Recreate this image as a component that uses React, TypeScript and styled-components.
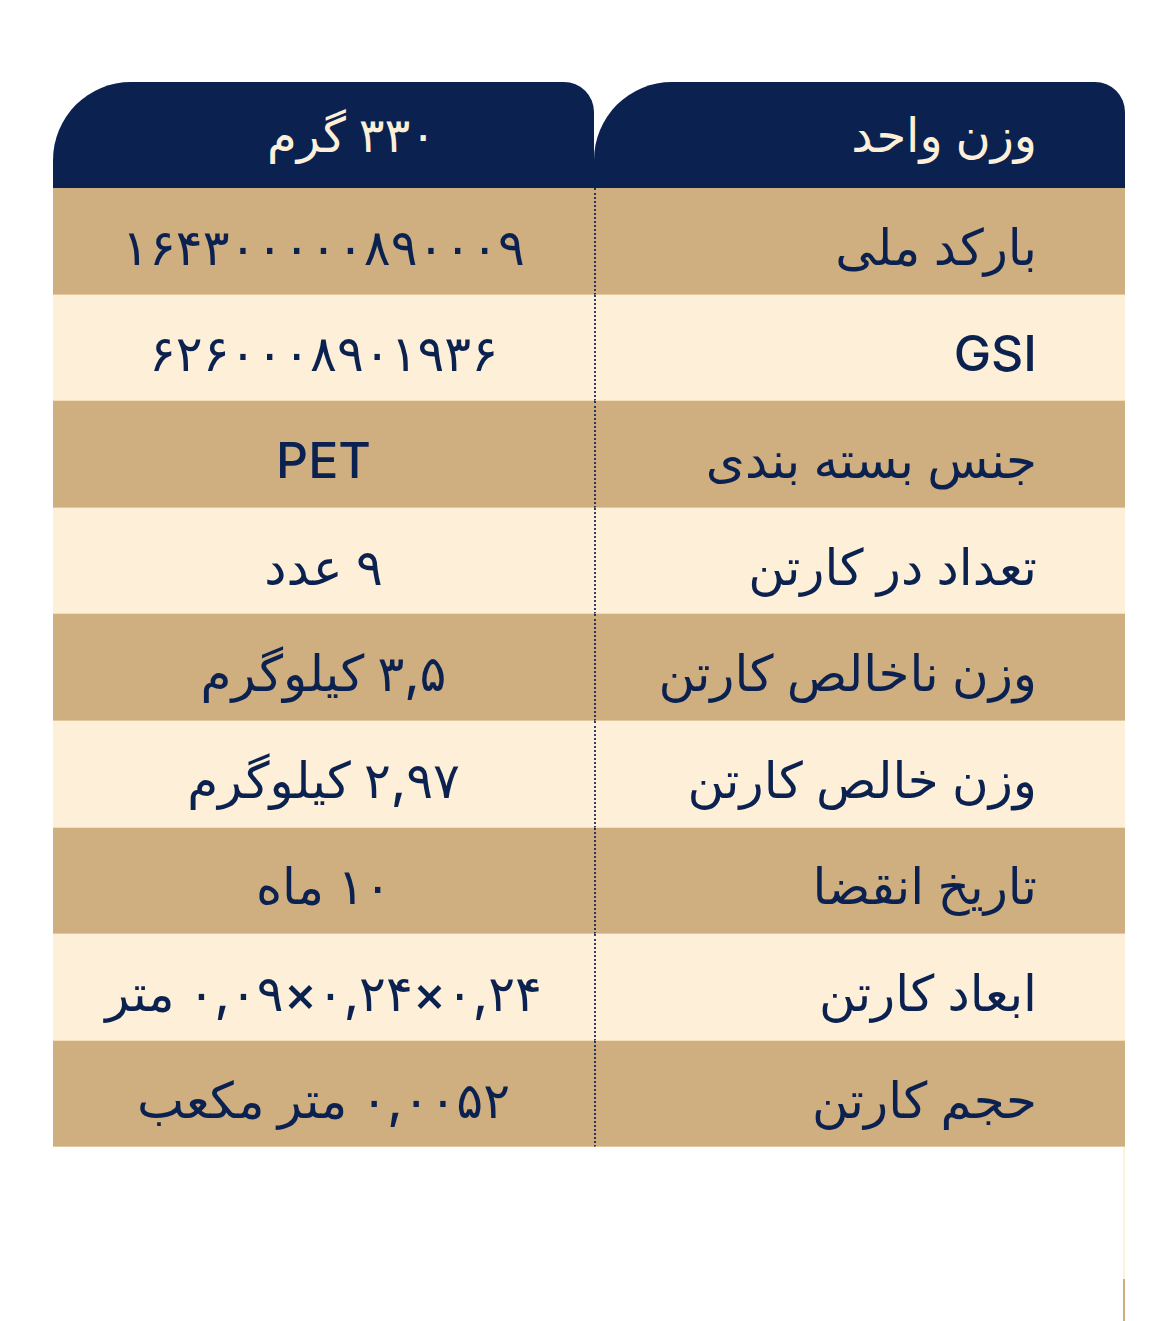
import React from "react";
import styled, { createGlobalStyle } from "styled-components";

const Global = createGlobalStyle`
  html, body { margin: 0; padding: 0; background: #ffffff; }
  body { font-family: Inter, "DejaVu Sans", sans-serif; }
`;

const NAVY = "#0b2150";
const TAN = "#cfae80";
const CREAM = "#fef0d8";

const Page = styled.div`
  width: 1165px;
  height: 1321px;
  padding: 82px 0 0 53px;
  box-sizing: border-box;
  overflow: hidden;
`;

const Table = styled.div`
  direction: rtl;
  width: 1072px;
  display: grid;
  grid-template-columns: 531px 541px;
`;

const HeadCell = styled.div<{ $side: "label" | "value" }>`
  height: 106px;
  background: ${NAVY};
  border-radius: 78px 30px 0 0;
  display: flex;
  align-items: center;
  justify-content: ${(p) => (p.$side === "label" ? "flex-start" : "center")};
  padding: ${(p) => (p.$side === "label" ? "0 88px 2px 0" : "0 0 2px 56px")};
  box-sizing: border-box;
  color: ${CREAM};
  font-family: Inter, "DejaVu Sans", sans-serif;
  font-size: 48px;
  font-weight: 500;
`;

const Cell = styled.div<{ $tone: "tan" | "cream"; $side: "label" | "value" }>`
  height: 106.6px;
  background: ${(p) => (p.$tone === "tan" ? TAN : CREAM)};
  box-sizing: border-box;
  display: flex;
  align-items: center;
  justify-content: ${(p) => (p.$side === "label" ? "flex-start" : "center")};
  padding: ${(p) => (p.$side === "label" ? "12px 88px 0 0" : "12px 0 0 0")};
  border-left: ${(p) => (p.$side === "label" ? `2px dotted rgba(11, 33, 80, 0.85)` : "none")};
  border-bottom: 1px solid ${(p) => (p.$tone === "tan" ? "#e2c89f" : "#f3ddb8")};
  color: ${NAVY};
  font-family: Inter, "DejaVu Sans", sans-serif;
  font-size: 50px;
  font-weight: 500;
  white-space: nowrap;
`;

const Tail = styled.div`
  width: 1072px;
  height: 174px;
  display: flex;
  justify-content: flex-end;
`;

const TailStrip = styled.div`
  width: 2px;
  height: 100%;
  background: linear-gradient(to bottom, #fbf3dc 0%, #fbf3dc 76%, ${TAN} 76%, ${TAN} 100%);
`;

const rows: [string, string][] = [
  ["بارکد ملی", "۱۶۴۳۰۰۰۰۰۸۹۰۰۰۹"],
  ["GSI", "۶۲۶۰۰۰۸۹۰۱۹۳۶"],
  ["جنس بسته بندی", "PET"],
  ["تعداد در کارتن", "۹ عدد"],
  ["وزن ناخالص کارتن", "۳,۵ کیلوگرم"],
  ["وزن خالص کارتن", "۲,۹۷ کیلوگرم"],
  ["تاریخ انقضا", "۱۰ ماه"],
  ["ابعاد کارتن", "۰,۲۴×۰,۲۴×۰,۰۹  متر"],
  ["حجم کارتن", "۰,۰۰۵۲ متر مکعب"],
];

export default function App() {
  return (
    <>
      <Global />
      <Page>
        <Table>
          <HeadCell $side="label">وزن واحد</HeadCell>
          <HeadCell $side="value">۳۳۰ گرم</HeadCell>
          {rows.map(([label, value], i) => {
            const tone = i % 2 === 0 ? "tan" : "cream";
            return (
              <React.Fragment key={label}>
                <Cell $tone={tone} $side="label">{label}</Cell>
                <Cell $tone={tone} $side="value">{value}</Cell>
              </React.Fragment>
            );
          })}
        </Table>
        <Tail>
          <TailStrip />
        </Tail>
      </Page>
    </>
  );
}
